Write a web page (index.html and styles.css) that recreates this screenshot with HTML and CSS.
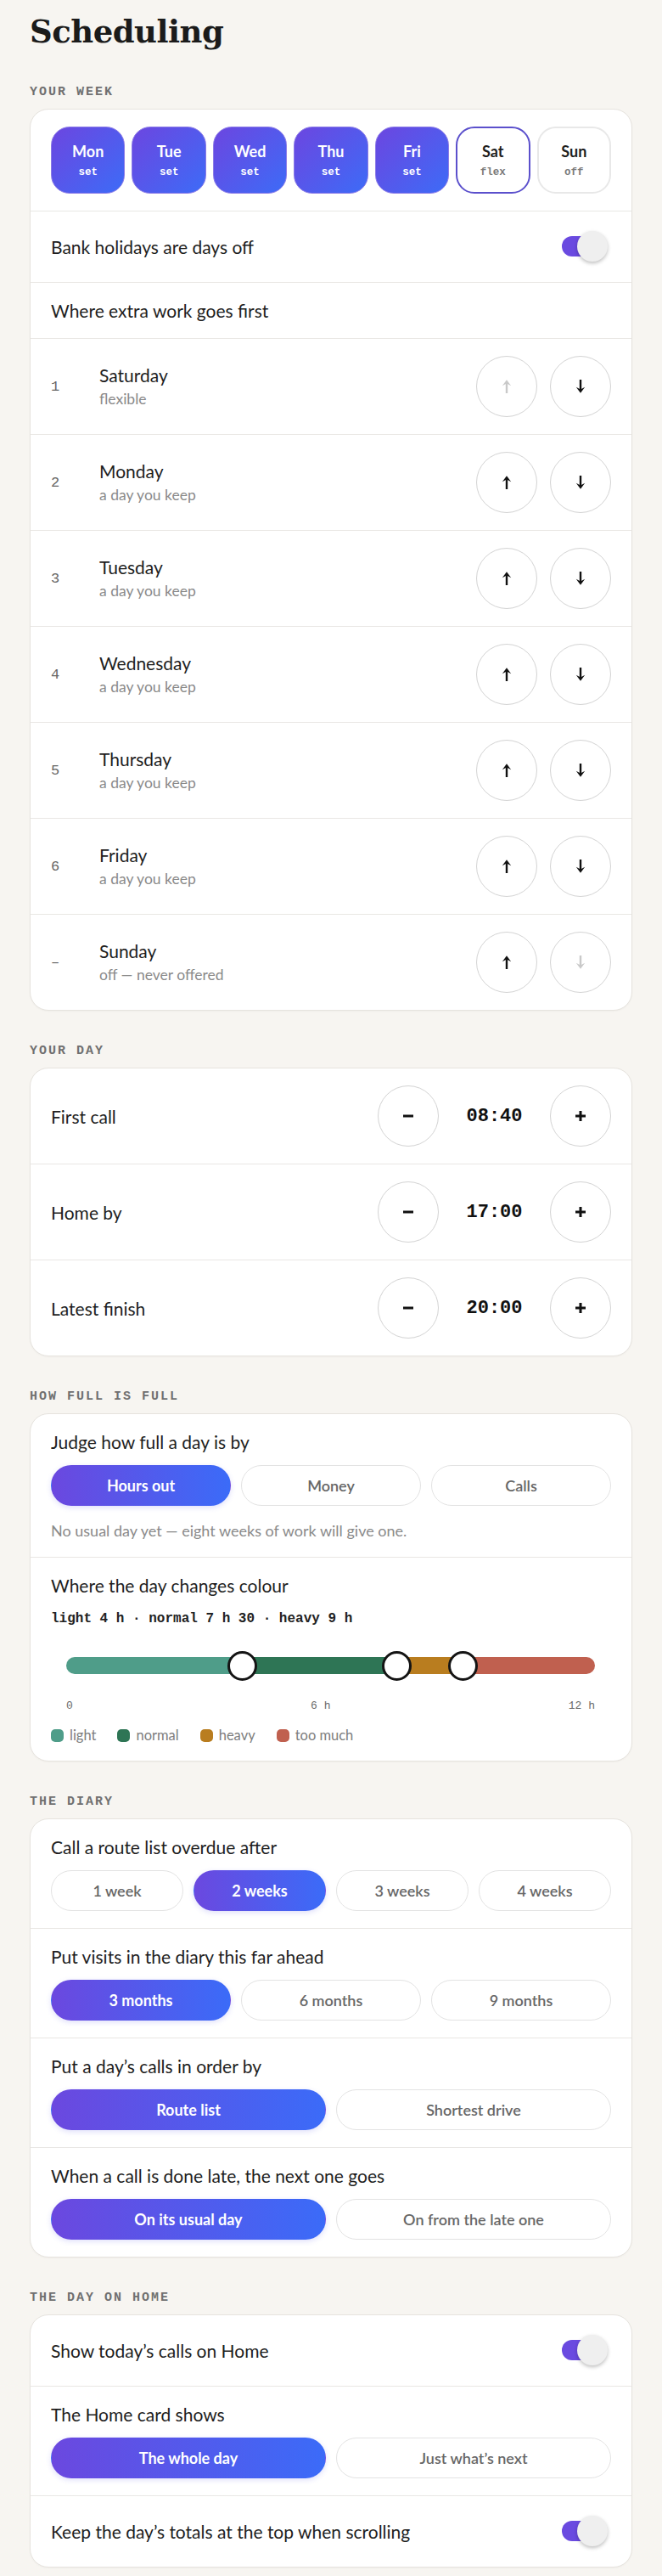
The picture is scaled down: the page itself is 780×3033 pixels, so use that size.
FILE: index.html
```html
<!DOCTYPE html>
<html lang="en">
<head>
<meta charset="utf-8">
<title>Scheduling</title>
<link rel="stylesheet" href="styles.css">
</head>
<body>
<main class="page">
  <h1 class="title">Scheduling</h1>

  <section class="section section-first">
    <h2 class="label">YOUR WEEK</h2>
    <div class="card">
      <div class="row days">
        <div class="day on"><span class="day-name">Mon</span><span class="day-state">set</span></div>
        <div class="day on"><span class="day-name">Tue</span><span class="day-state">set</span></div>
        <div class="day on"><span class="day-name">Wed</span><span class="day-state">set</span></div>
        <div class="day on"><span class="day-name">Thu</span><span class="day-state">set</span></div>
        <div class="day on"><span class="day-name">Fri</span><span class="day-state">set</span></div>
        <div class="day flexday"><span class="day-name">Sat</span><span class="day-state">flex</span></div>
        <div class="day offday"><span class="day-name">Sun</span><span class="day-state">off</span></div>
      </div>
      <div class="row toggle-row">
        <span class="row-text">Bank holidays are days off</span>
        <span class="toggle"><span class="track"></span><span class="knob"></span></span>
      </div>
      <div class="row">
        <span class="row-text">Where extra work goes first</span>
      </div>

      <div class="row order-row">
        <span class="rank">1</span>
        <div class="order-name"><span class="name">Saturday</span><span class="sub">flexible</span></div>
        <div class="moves">
          <button class="circle is-disabled" type="button"><svg class="arrow" viewBox="0 0 14 20" width="14" height="20"><path d="M7 18V5" class="shaft"/><path d="M1.8 9.2 L7 2.2 L12.2 9.2 L7 6.6 Z" class="head"/></svg></button>
          <button class="circle" type="button"><svg class="arrow down" viewBox="0 0 14 20" width="14" height="20"><path d="M7 18V5" class="shaft"/><path d="M1.8 9.2 L7 2.2 L12.2 9.2 L7 6.6 Z" class="head"/></svg></button>
        </div>
      </div>
      <div class="row order-row">
        <span class="rank">2</span>
        <div class="order-name"><span class="name">Monday</span><span class="sub">a day you keep</span></div>
        <div class="moves">
          <button class="circle" type="button"><svg class="arrow" viewBox="0 0 14 20" width="14" height="20"><path d="M7 18V5" class="shaft"/><path d="M1.8 9.2 L7 2.2 L12.2 9.2 L7 6.6 Z" class="head"/></svg></button>
          <button class="circle" type="button"><svg class="arrow down" viewBox="0 0 14 20" width="14" height="20"><path d="M7 18V5" class="shaft"/><path d="M1.8 9.2 L7 2.2 L12.2 9.2 L7 6.6 Z" class="head"/></svg></button>
        </div>
      </div>
      <div class="row order-row">
        <span class="rank">3</span>
        <div class="order-name"><span class="name">Tuesday</span><span class="sub">a day you keep</span></div>
        <div class="moves">
          <button class="circle" type="button"><svg class="arrow" viewBox="0 0 14 20" width="14" height="20"><path d="M7 18V5" class="shaft"/><path d="M1.8 9.2 L7 2.2 L12.2 9.2 L7 6.6 Z" class="head"/></svg></button>
          <button class="circle" type="button"><svg class="arrow down" viewBox="0 0 14 20" width="14" height="20"><path d="M7 18V5" class="shaft"/><path d="M1.8 9.2 L7 2.2 L12.2 9.2 L7 6.6 Z" class="head"/></svg></button>
        </div>
      </div>
      <div class="row order-row">
        <span class="rank">4</span>
        <div class="order-name"><span class="name">Wednesday</span><span class="sub">a day you keep</span></div>
        <div class="moves">
          <button class="circle" type="button"><svg class="arrow" viewBox="0 0 14 20" width="14" height="20"><path d="M7 18V5" class="shaft"/><path d="M1.8 9.2 L7 2.2 L12.2 9.2 L7 6.6 Z" class="head"/></svg></button>
          <button class="circle" type="button"><svg class="arrow down" viewBox="0 0 14 20" width="14" height="20"><path d="M7 18V5" class="shaft"/><path d="M1.8 9.2 L7 2.2 L12.2 9.2 L7 6.6 Z" class="head"/></svg></button>
        </div>
      </div>
      <div class="row order-row">
        <span class="rank">5</span>
        <div class="order-name"><span class="name">Thursday</span><span class="sub">a day you keep</span></div>
        <div class="moves">
          <button class="circle" type="button"><svg class="arrow" viewBox="0 0 14 20" width="14" height="20"><path d="M7 18V5" class="shaft"/><path d="M1.8 9.2 L7 2.2 L12.2 9.2 L7 6.6 Z" class="head"/></svg></button>
          <button class="circle" type="button"><svg class="arrow down" viewBox="0 0 14 20" width="14" height="20"><path d="M7 18V5" class="shaft"/><path d="M1.8 9.2 L7 2.2 L12.2 9.2 L7 6.6 Z" class="head"/></svg></button>
        </div>
      </div>
      <div class="row order-row">
        <span class="rank">6</span>
        <div class="order-name"><span class="name">Friday</span><span class="sub">a day you keep</span></div>
        <div class="moves">
          <button class="circle" type="button"><svg class="arrow" viewBox="0 0 14 20" width="14" height="20"><path d="M7 18V5" class="shaft"/><path d="M1.8 9.2 L7 2.2 L12.2 9.2 L7 6.6 Z" class="head"/></svg></button>
          <button class="circle" type="button"><svg class="arrow down" viewBox="0 0 14 20" width="14" height="20"><path d="M7 18V5" class="shaft"/><path d="M1.8 9.2 L7 2.2 L12.2 9.2 L7 6.6 Z" class="head"/></svg></button>
        </div>
      </div>
      <div class="row order-row">
        <span class="rank">–</span>
        <div class="order-name"><span class="name">Sunday</span><span class="sub">off — never offered</span></div>
        <div class="moves">
          <button class="circle" type="button"><svg class="arrow" viewBox="0 0 14 20" width="14" height="20"><path d="M7 18V5" class="shaft"/><path d="M1.8 9.2 L7 2.2 L12.2 9.2 L7 6.6 Z" class="head"/></svg></button>
          <button class="circle is-disabled" type="button"><svg class="arrow down" viewBox="0 0 14 20" width="14" height="20"><path d="M7 18V5" class="shaft"/><path d="M1.8 9.2 L7 2.2 L12.2 9.2 L7 6.6 Z" class="head"/></svg></button>
        </div>
      </div>
    </div>
  </section>

  <section class="section">
    <h2 class="label">YOUR DAY</h2>
    <div class="card">
      <div class="row time-row">
        <span class="row-text">First call</span>
        <div class="stepper">
          <button class="circle" type="button"><svg viewBox="0 0 14 14" width="14" height="14"><rect x="1" y="5.5" width="12" height="3" class="glyph"/></svg></button>
          <span class="time">08:40</span>
          <button class="circle" type="button"><svg viewBox="0 0 14 14" width="14" height="14"><rect x="1" y="5.5" width="12" height="3" class="glyph"/><rect x="5.5" y="1" width="3" height="12" class="glyph"/></svg></button>
        </div>
      </div>
      <div class="row time-row">
        <span class="row-text">Home by</span>
        <div class="stepper">
          <button class="circle" type="button"><svg viewBox="0 0 14 14" width="14" height="14"><rect x="1" y="5.5" width="12" height="3" class="glyph"/></svg></button>
          <span class="time">17:00</span>
          <button class="circle" type="button"><svg viewBox="0 0 14 14" width="14" height="14"><rect x="1" y="5.5" width="12" height="3" class="glyph"/><rect x="5.5" y="1" width="3" height="12" class="glyph"/></svg></button>
        </div>
      </div>
      <div class="row time-row">
        <span class="row-text">Latest finish</span>
        <div class="stepper">
          <button class="circle" type="button"><svg viewBox="0 0 14 14" width="14" height="14"><rect x="1" y="5.5" width="12" height="3" class="glyph"/></svg></button>
          <span class="time">20:00</span>
          <button class="circle" type="button"><svg viewBox="0 0 14 14" width="14" height="14"><rect x="1" y="5.5" width="12" height="3" class="glyph"/><rect x="5.5" y="1" width="3" height="12" class="glyph"/></svg></button>
        </div>
      </div>
    </div>
  </section>

  <section class="section">
    <h2 class="label">HOW FULL IS FULL</h2>
    <div class="card">
      <div class="row stack">
        <span class="row-text">Judge how full a day is by</span>
        <div class="seg seg-3">
          <button class="seg-btn on" type="button">Hours out</button>
          <button class="seg-btn" type="button">Money</button>
          <button class="seg-btn" type="button">Calls</button>
        </div>
        <p class="note">No usual day yet — eight weeks of work will give one.</p>
      </div>
      <div class="row stack">
        <span class="row-text">Where the day changes colour</span>
        <p class="caption">light 4 h · normal 7 h 30 · heavy 9 h</p>
        <div class="slider">
          <div class="bar">
            <span class="band light" style="width:33.333%"></span>
            <span class="band normal" style="width:29.167%"></span>
            <span class="band heavy" style="width:12.5%"></span>
            <span class="band much" style="width:25%"></span>
          </div>
          <div class="thumbs">
            <span class="thumb" style="left:33.333%"></span>
            <span class="thumb" style="left:62.5%"></span>
            <span class="thumb" style="left:75%"></span>
          </div>
        </div>
        <div class="axis"><span>0</span><span>6 h</span><span>12 h</span></div>
        <div class="legend">
          <span class="legend-item"><span class="dot light"></span>light</span>
          <span class="legend-item"><span class="dot normal"></span>normal</span>
          <span class="legend-item"><span class="dot heavy"></span>heavy</span>
          <span class="legend-item"><span class="dot much"></span>too much</span>
        </div>
      </div>
    </div>
  </section>

  <section class="section">
    <h2 class="label">THE DIARY</h2>
    <div class="card">
      <div class="row stack">
        <span class="row-text">Call a route list overdue after</span>
        <div class="seg seg-4">
          <button class="seg-btn" type="button">1 week</button>
          <button class="seg-btn on" type="button">2 weeks</button>
          <button class="seg-btn" type="button">3 weeks</button>
          <button class="seg-btn" type="button">4 weeks</button>
        </div>
      </div>
      <div class="row stack">
        <span class="row-text">Put visits in the diary this far ahead</span>
        <div class="seg seg-3">
          <button class="seg-btn on" type="button">3 months</button>
          <button class="seg-btn" type="button">6 months</button>
          <button class="seg-btn" type="button">9 months</button>
        </div>
      </div>
      <div class="row stack">
        <span class="row-text">Put a day’s calls in order by</span>
        <div class="seg seg-2">
          <button class="seg-btn on" type="button">Route list</button>
          <button class="seg-btn" type="button">Shortest drive</button>
        </div>
      </div>
      <div class="row stack">
        <span class="row-text">When a call is done late, the next one goes</span>
        <div class="seg seg-2">
          <button class="seg-btn on" type="button">On its usual day</button>
          <button class="seg-btn" type="button">On from the late one</button>
        </div>
      </div>
    </div>
  </section>

  <section class="section">
    <h2 class="label">THE DAY ON HOME</h2>
    <div class="card">
      <div class="row toggle-row">
        <span class="row-text">Show today’s calls on Home</span>
        <span class="toggle"><span class="track"></span><span class="knob"></span></span>
      </div>
      <div class="row stack">
        <span class="row-text">The Home card shows</span>
        <div class="seg seg-2">
          <button class="seg-btn on" type="button">The whole day</button>
          <button class="seg-btn" type="button">Just what’s next</button>
        </div>
      </div>
      <div class="row toggle-row">
        <span class="row-text">Keep the day’s totals at the top when scrolling</span>
        <span class="toggle"><span class="track"></span><span class="knob"></span></span>
      </div>
    </div>
  </section>
</main>
</body>
</html>
```

FILE: styles.css
```css
* { box-sizing: border-box; }

body {
  margin: 0;
  background: #f7f5f1;
  font-family: Lato, "Noto Sans", sans-serif;
  color: #1e1e1e;
}

.page {
  padding: 11px 35px 14px;
}

.title {
  margin: 0;
  font-family: "DejaVu Serif", "Liberation Serif", serif;
  font-size: 37px;
  line-height: 53px;
  font-weight: 700;
  letter-spacing: -0.5px;
  color: #1b1b1b;
}

.section { margin-top: 39px; }
.section-first { margin-top: 36px; }

.label {
  margin: 0 0 10px;
  font-family: "Liberation Mono", monospace;
  font-size: 15px;
  line-height: 18px;
  font-weight: 700;
  letter-spacing: 2px;
  color: #707070;
}

.card {
  background: #fff;
  border: 1px solid #e6e3de;
  border-radius: 22px;
  overflow: hidden;
  box-shadow: 0 1px 2px rgba(0, 0, 0, 0.03);
}

.row {
  display: flex;
  align-items: center;
  padding: 20px 24px;
  border-top: 1px solid #e9e7e4;
}
.row:first-child { border-top: 0; }

.row-text {
  font-size: 21px;
  line-height: 25px;
}

/* week chips */
.days {
  display: grid;
  grid-template-columns: repeat(7, 1fr);
  gap: 8px;
}
.day {
  height: 79px;
  border-radius: 22px;
  display: flex;
  flex-direction: column;
  align-items: center;
  justify-content: center;
  gap: 6px;
  background: #fff;
}
.day-name {
  font-size: 18px;
  line-height: 22px;
  font-weight: 700;
}
.day-state {
  font-family: "Liberation Mono", monospace;
  font-size: 12.5px;
  line-height: 16px;
  font-weight: 700;
}
.day.on {
  background: linear-gradient(135deg, #6c46e0 0%, #3d6bf7 100%);
  border: 1px solid #8b7be6;
  color: #fff;
}
.day.flexday {
  border: 2px solid #5b50cc;
  color: #1e1e1e;
}
.day.offday {
  border: 2px solid #e8e8e8;
  color: #1e1e1e;
}
.flexday .day-state,
.offday .day-state { color: #7a7a7a; }

/* toggle */
.toggle-row { justify-content: space-between; }
.toggle {
  position: relative;
  flex: none;
  width: 58px;
  height: 43px;
}
.track {
  position: absolute;
  left: 0;
  top: 9px;
  width: 50px;
  height: 24px;
  border-radius: 12px;
  background: #6a4ae0;
}
.knob {
  position: absolute;
  left: 18px;
  top: 3px;
  width: 36px;
  height: 36px;
  border-radius: 50%;
  background: #efefef;
  box-shadow: 0 2px 4px rgba(0, 0, 0, 0.25);
}

/* reorder list */
.rank {
  width: 57px;
  flex: none;
  font-family: "Liberation Mono", monospace;
  font-size: 17px;
  color: #666;
}
.order-name {
  flex: 1;
  display: flex;
  flex-direction: column;
  gap: 5px;
}
.name {
  font-size: 21px;
  line-height: 25px;
}
.sub {
  font-size: 17.5px;
  line-height: 22px;
  color: #8a8a8a;
}
.moves {
  display: flex;
  gap: 15px;
}
.circle {
  width: 72px;
  height: 72px;
  padding: 0;
  border-radius: 50%;
  border: 1.5px solid #d3d3d3;
  background: #fff;
  color: #111;
  display: flex;
  align-items: center;
  justify-content: center;
  flex: none;
}
.circle.is-disabled { color: #c9c9c9; }
.arrow .shaft {
  stroke: currentColor;
  stroke-width: 2.4;
  fill: none;
}
.arrow .head { fill: currentColor; }
.arrow.down { transform: rotate(180deg); }
.glyph { fill: #111; }

/* time steppers */
.time-row { justify-content: space-between; }
.stepper {
  display: flex;
  align-items: center;
  gap: 14px;
}
.time {
  width: 103px;
  text-align: center;
  font-family: "Liberation Mono", monospace;
  font-size: 22px;
  font-weight: 700;
  color: #111;
}

/* stacked rows with segmented buttons */
.stack {
  flex-direction: column;
  align-items: stretch;
}
.seg {
  display: grid;
  gap: 12px;
  margin-top: 15px;
}
.seg-2 { grid-template-columns: repeat(2, 1fr); }
.seg-3 { grid-template-columns: repeat(3, 1fr); }
.seg-4 { grid-template-columns: repeat(4, 1fr); }
.seg-btn {
  height: 48px;
  border-radius: 24px;
  border: 1.5px solid #e3e3e3;
  background: #fff;
  font-family: Lato, "Noto Sans", sans-serif;
  font-size: 18px;
  font-weight: 600;
  color: #676767;
  padding: 0 8px;
}
.seg-btn.on {
  background: linear-gradient(90deg, #6b48df 0%, #3b6bf8 100%);
  border-color: transparent;
  color: #fff;
  font-weight: 700;
  box-shadow: 0 2px 6px rgba(80, 80, 230, 0.18);
}

.note {
  margin: 18px 0 0;
  font-size: 18px;
  line-height: 22px;
  color: #8a8a8a;
}

/* thresholds slider */
.caption {
  margin: 17px 0 0;
  font-family: "Liberation Mono", monospace;
  font-size: 16px;
  line-height: 20px;
  font-weight: 700;
  color: #222;
}
.slider {
  position: relative;
  height: 36px;
  margin-top: 27px;
}
.bar {
  position: absolute;
  left: 18px;
  right: 19px;
  top: 8px;
  height: 20px;
  border-radius: 10px;
  overflow: hidden;
  display: flex;
}
.band { display: block; height: 100%; }
.light { background: #4f9d89; }
.normal { background: #2e7555; }
.heavy { background: #b97d1f; }
.much { background: #c0604f; }
.thumbs {
  position: absolute;
  left: 18px;
  right: 19px;
  top: 0;
  bottom: 0;
}
.thumb {
  position: absolute;
  top: 0.5px;
  width: 35px;
  height: 35px;
  margin-left: -17.5px;
  border-radius: 50%;
  background: #fff;
  border: 3px solid #141414;
}
.axis {
  display: flex;
  justify-content: space-between;
  margin-top: 22px;
  padding: 0 19px 0 18px;
  font-family: "Liberation Mono", monospace;
  font-size: 13px;
  line-height: 16px;
  color: #6a6a6a;
}
.legend {
  display: flex;
  gap: 25px;
  margin-top: 16px;
  font-size: 16.5px;
  line-height: 20px;
  color: #7d7d7d;
}
.legend-item {
  display: flex;
  align-items: center;
  gap: 7px;
}
.dot {
  width: 15px;
  height: 15px;
  border-radius: 5px;
}
```
